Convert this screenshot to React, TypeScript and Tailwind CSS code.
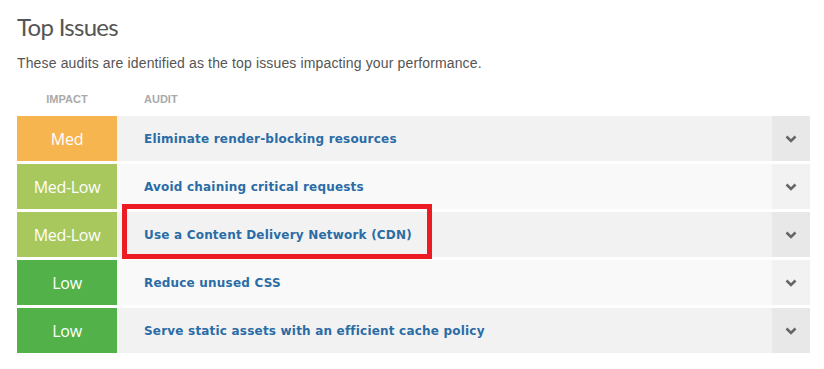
import React from "react";

const rows = [
  { impact: "Med", color: "bg-[#f7b550]", text: "Eliminate render-blocking resources", dark: true },
  { impact: "Med-Low", color: "bg-[#a8c85e]", text: "Avoid chaining critical requests", dark: false },
  { impact: "Med-Low", color: "bg-[#a8c85e]", text: "Use a Content Delivery Network (CDN)", dark: true, boxed: true },
  { impact: "Low", color: "bg-[#52b148]", text: "Reduce unused CSS", dark: false },
  { impact: "Low", color: "bg-[#52b148]", text: "Serve static assets with an efficient cache policy", dark: true },
];

function Chevron() {
  return (
    <svg width="12" height="8" viewBox="0 0 12 8">
      <path d="M1.5 1.5 L6 6 L10.5 1.5" fill="none" stroke="#666" strokeWidth="2.6" />
    </svg>
  );
}

export default function App() {
  return (
    <div className="bg-white w-[824px] h-[369px] pl-[17px] pt-[12px] text-[#555]">
      <h2 className="text-[24px] leading-[30px] font-['Lato',sans-serif] text-[#555] tracking-[-0.7px]">Top Issues</h2>
      <p className="mt-[12px] text-[14px] leading-[18px] font-['Liberation_Sans',Arial,sans-serif] text-[#555] tracking-[0.14px]">
        These audits are identified as the top issues impacting your performance.
      </p>
      <div className="flex mt-[18px] h-[18px] items-center text-[11px] font-bold font-['Liberation_Sans',Arial,sans-serif] text-[#aaa]">
        <div className="w-[100px] text-center">IMPACT</div>
        <div className="pl-[27px]">AUDIT</div>
      </div>
      <div className="mt-[8px] flex flex-col gap-[3px] w-[793px]">
        {rows.map((r, i) => (
          <div key={i} className="flex h-[45px] relative">
            <div className={`w-[100px] ${r.color} flex items-center justify-center text-white text-[16px] font-['Open_Sans',sans-serif] tracking-[-0.3px]`}>
              {r.impact}
            </div>
            <div className={`flex-1 flex items-center pl-[27px] ${r.dark ? "bg-[#f2f2f2]" : "bg-[#f9f9f9]"}`}>
              <span className="text-[12px] font-bold text-[#2a6ca6] font-['DejaVu_Sans',Verdana,sans-serif] tracking-[0.2px]">
                {r.text}
              </span>
            </div>
            <div className={`w-[38px] flex items-center justify-center ${r.dark ? "bg-[#e8e8e8]" : "bg-[#f2f2f2]"}`}>
              <Chevron />
            </div>
            {r.boxed && (
              <div className="absolute left-[105px] top-[-8px] w-[310px] h-[55px] border-[5px] border-[#ed1c24]" />
            )}
          </div>
        ))}
      </div>
    </div>
  );
}
